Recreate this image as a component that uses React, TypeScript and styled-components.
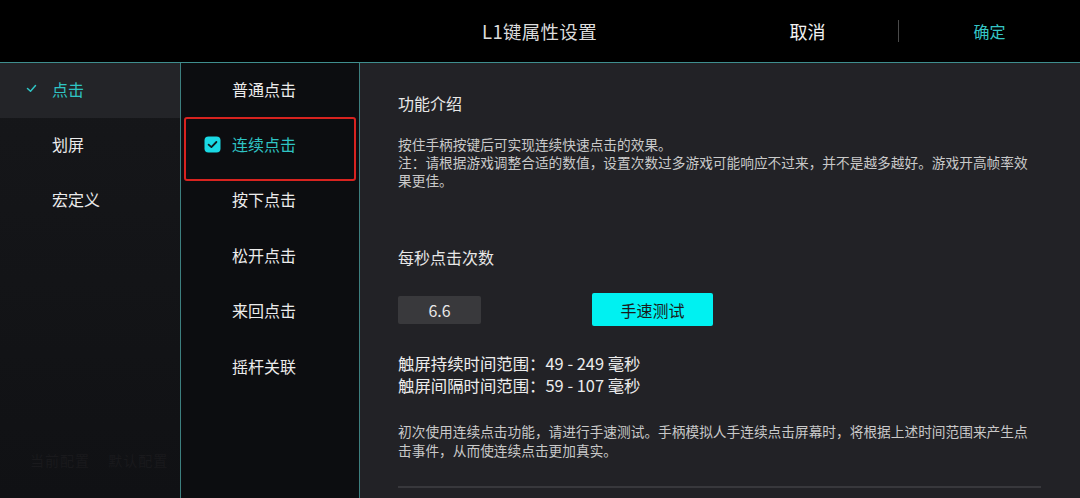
import React from "react";
import styled, {createGlobalStyle} from "styled-components";

const GlobalStyle = createGlobalStyle`
    html, body {
        margin: 0;
        padding: 0;
        background: #000;
        overflow: hidden;
    }
    body {
        font-family: "Noto Sans CJK SC", "Noto Sans", sans-serif;
    }
`

const Page = styled.div`
    width: 1080px;
    height: 498px;
    display: flex;
    flex-direction: column;
    overflow: hidden;
`

const TopBar = styled.div`
    height: 62px;
    flex-shrink: 0;
    background: #000;
    border-bottom: 1.5px solid #3f8e8e;
    display: grid;
    grid-template-columns: 362px 1fr 181px 1px 181px;
    align-items: center;
`

const Title = styled.div`
    grid-column: 2;
    text-align: center;
    font-size: 18.5px;
    color: #dcdcdc;
    letter-spacing: 0.3px;
`

const BarButton = styled.div<{ $accent?: boolean }>`
    text-align: center;
    font-size: ${p => p.$accent ? '16px' : '18px'};
    color: ${p => p.$accent ? '#35c6c6' : '#f2f2f2'};
`

const BarDivider = styled.div`
    width: 1px;
    height: 22px;
    background: #4a4a4a;
`

const Body = styled.div`
    flex: 1;
    display: flex;
    min-height: 0;
`

const CategoryColumn = styled.div`
    width: 180px;
    flex-shrink: 0;
    display: flex;
    flex-direction: column;
    background: linear-gradient(#16171a, #101114);
`

const ModeColumn = styled.div`
    width: 178px;
    flex-shrink: 0;
    border-left: 1px solid #3d7f7f;
    border-right: 1px solid #3d7f7f;
    background: #0c0d10;
    display: flex;
    flex-direction: column;
`

const Item = styled.div<{ $active?: boolean; $lit?: boolean; $pad: number }>`
    position: relative;
    box-sizing: border-box;
    height: 55.4px;
    padding-bottom: 4px;
    flex-shrink: 0;
    display: flex;
    align-items: center;
    padding-left: ${p => p.$pad}px;
    font-size: 16px;
    color: ${p => p.$active ? '#2fc4c4' : '#ececec'};
    background: ${p => p.$lit ? '#232428' : 'transparent'};
`

const IconSlot = styled.span<{ $w: number }>`
    width: ${p => p.$w}px;
    display: flex;
    align-items: center;
`

const Highlight = styled.div`
    position: absolute;
    left: 3px;
    right: 3px;
    top: -1.5px;
    bottom: -7px;
    border: 2px solid #d8231f;
    border-radius: 3px;
    pointer-events: none;
`

const GhostText = styled.div`
    margin-top: auto;
    margin-bottom: 28px;
    padding-left: 30px;
    font-size: 14px;
    color: #19191c;
    letter-spacing: 1px;
    word-spacing: 14px;
`

const Detail = styled.div`
    flex: 1;
    background: #222226;
    padding: 27.5px 38px 0 38px;
    display: flex;
    flex-direction: column;
`

const Heading = styled.div<{ $top?: number }>`
    margin-top: ${p => p.$top ?? 0}px;
    font-size: 16px;
    line-height: 24px;
    color: #e8e8e8;
`

const Note = styled.div<{ $top: number }>`
    margin-top: ${p => p.$top}px;
    font-size: 13.7px;
    line-height: 18.3px;
    color: #c9c9c9;
    white-space: nowrap;
`

const SpeedRow = styled.div`
    margin-top: 24px;
    display: flex;
    align-items: center;
`

const ValueBox = styled.div`
    width: 83px;
    height: 28px;
    border-radius: 2px;
    background: #39393c;
    color: #e8e8e8;
    font-size: 16px;
    display: flex;
    align-items: center;
    justify-content: center;
`

const TestButton = styled.div`
    margin-left: 111px;
    width: 121px;
    height: 33px;
    border-radius: 2px;
    background: #00f1f1;
    color: #1a1a1a;
    font-size: 16px;
    display: flex;
    align-items: center;
    justify-content: center;
`

const Ranges = styled.div`
    margin-top: 26px;
    font-size: 16.4px;
    line-height: 22px;
    color: #ececec;
`

const Rule = styled.div`
    margin-top: 27px;
    height: 2px;
    width: 643px;
    background: #38383c;
`

function TickMark() {
    return (
        <svg width="11" height="9" viewBox="0 0 11 9">
            <polyline points="1.5,4.5 4.5,7.2 9.5,1.5" fill="none" stroke="#2fc4c4" strokeWidth="1.5"
                      strokeLinecap="round" strokeLinejoin="round"/>
        </svg>
    )
}

function CheckedBox() {
    return (
        <svg width="17" height="17" viewBox="0 0 17 17">
            <rect x="0.5" y="0.5" width="16" height="16" rx="4" fill="#1ad9e4"/>
            <polyline points="4.6,8.6 7.4,11.1 12.4,6" fill="none" stroke="#0e1a1d" strokeWidth="1.8"
                      strokeLinecap="round" strokeLinejoin="round"/>
        </svg>
    )
}

const categories = ['点击', '划屏', '宏定义'];
const modes = ['普通点击', '连续点击', '按下点击', '松开点击', '来回点击', '摇杆关联'];

export default function App(): React.ReactElement {
    const category = 0;
    const mode = 1;

    return (
        <Page>
            <GlobalStyle/>
            <TopBar>
                <Title>L1键属性设置</Title>
                <BarButton>取消</BarButton>
                <BarDivider/>
                <BarButton $accent>确定</BarButton>
            </TopBar>

            <Body>
                <CategoryColumn>
                    {categories.map((name, i) => (
                        <Item key={name} $pad={26} $active={i === category} $lit={i === category}>
                            <IconSlot $w={26}>{i === category && <TickMark/>}</IconSlot>
                            {name}
                        </Item>
                    ))}
                    <GhostText>当前配置 默认配置</GhostText>
                </CategoryColumn>

                <ModeColumn>
                    {modes.map((name, i) => (
                        <Item key={name} $pad={23} $active={i === mode}>
                            <IconSlot $w={28}>{i === mode && <CheckedBox/>}</IconSlot>
                            {name}
                            {i === mode && <Highlight/>}
                        </Item>
                    ))}
                </ModeColumn>

                <Detail>
                    <Heading>功能介绍</Heading>
                    <Note $top={20}>
                        按住手柄按键后可实现连续快速点击的效果。<br/>
                        注：请根据游戏调整合适的数值，设置次数过多游戏可能响应不过来，并不是越多越好。游戏开高帧率效<br/>
                        果更佳。
                    </Note>

                    <Heading $top={56}>每秒点击次数</Heading>
                    <SpeedRow>
                        <ValueBox>6.6</ValueBox>
                        <TestButton>手速测试</TestButton>
                    </SpeedRow>

                    <Ranges>
                        触屏持续时间范围：49 - 249 毫秒<br/>
                        触屏间隔时间范围：59 - 107 毫秒
                    </Ranges>

                    <Note $top={26}>
                        初次使用连续点击功能，请进行手速测试。手柄模拟人手连续点击屏幕时，将根据上述时间范围来产生点<br/>
                        击事件，从而使连续点击更加真实。
                    </Note>

                    <Rule/>
                </Detail>
            </Body>
        </Page>
    )
}
